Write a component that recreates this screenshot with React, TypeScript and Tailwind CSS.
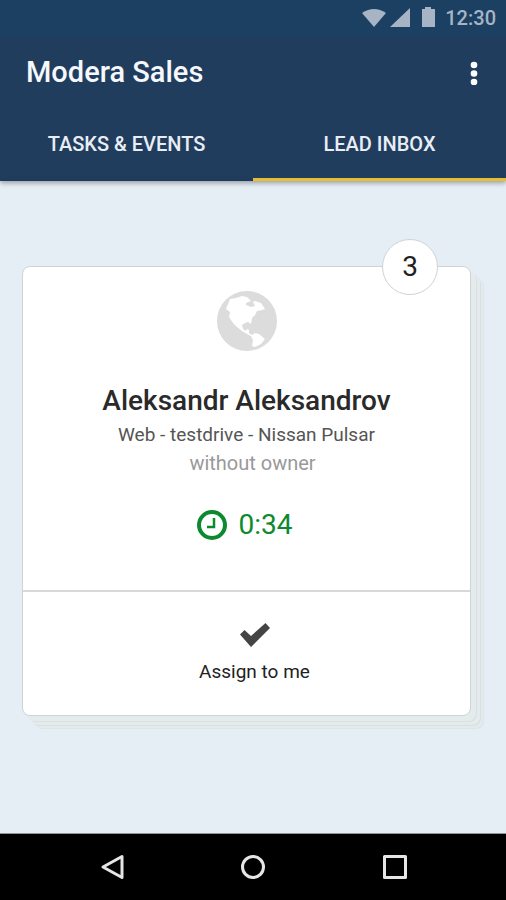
import type { ReactNode } from "react";

function StatusBar() {
  return (
    <div className="flex h-9 items-center justify-end bg-[#1c4062] pr-[10px] text-[#a6b4c5]">
      <svg width="84" height="24" viewBox="0 0 84 24" fill="currentColor" aria-hidden="true">
        <path d="M1 7Q13-1 25 7L13 21Z" />
        <path d="M49 2V21H29Z" />
        <path d="M64 1h6v2h4v18H61V3h3z" />
      </svg>
      <span className="text-xl font-medium">12:30</span>
    </div>
  );
}

function Tab({ active, children }: { active?: boolean; children: ReactNode }) {
  return (
    <button
      type="button"
      role="tab"
      aria-selected={!!active}
      className={
        "flex-1 border-b-[3px] text-xl font-medium text-[#e9eef6] " +
        (active ? "border-[#e9bd32]" : "border-[#1f3b5b]")
      }
    >
      {children}
    </button>
  );
}

function Globe() {
  return (
    <svg width="60" height="60" viewBox="0 0 60 60" aria-hidden="true">
      <circle cx="30" cy="30" r="30" fill="#dcdcdc" />
      <path
        fill="#fff"
        d="M13 8L19 7L25 5L30 6L34 10L29 12L29 14L34 16L38 15L36 11L38 10L44 12L48 18L45 19L40 20L38 24L35 27L34 33L31 31L28 32L25 34L26 38L29 40L30 38L32 39L32 42L35 44L38 42L42 43L48 48L44 53L38 56L35 55L36 49L34 45L30 43L25 40L20 36L16 32L12 26L13 21L9 18Z"
      />
    </svg>
  );
}

function LeadCard() {
  return (
    <article className="relative rounded-lg border border-[#d0d3d3] bg-white text-center shadow-[5px_5px_0_0_#e4ebed,6px_6px_0_0_#d9e0e1,9px_9px_0_0_#e4ebed,10px_10px_0_0_#d9e0e1,12px_12px_0_0_#e4ebed,13px_13px_0_0_#dce4e6]">
      <span className="absolute -top-7 right-8 flex size-14 items-center justify-center rounded-full border border-[#d0d3d3] bg-white text-[28px] text-[#222]">
        3
      </span>
      <div className="flex h-[323px] flex-col items-center pt-6">
        <Globe />
        <h2 className="mt-8 text-[28px] leading-9 font-medium text-[#2a2a2a]">Aleksandr Aleksandrov</h2>
        <p className="text-[19px] leading-8 text-[#555]">Web - testdrive - Nissan Pulsar</p>
        <p className="pl-3 text-xl leading-6 text-[#999]">without owner</p>
        <p className="mt-8 flex items-center gap-3 pr-1 text-[28px] leading-9 text-[#0c8a30]">
          <svg width="30" height="30" viewBox="0 0 30 30" fill="none" stroke="currentColor" aria-hidden="true">
            <circle cx="15" cy="15" r="13" strokeWidth="4" />
            <path d="M17 8v9h-7" strokeWidth="2.5" />
          </svg>
          0:34
        </p>
      </div>
      <button
        type="button"
        className="flex h-[125px] w-full flex-col items-center gap-2 border-t-2 border-[#d8d8d8] pt-[30px] pl-4 text-[19px] text-[#222]"
      >
        <svg width="32" height="26" viewBox="0 0 32 26" fill="#444" aria-hidden="true">
          <path d="M1 12.5L5.500 8L12 14L26.500 1L31 6L12 25z" />
        </svg>
        <span className="leading-8">Assign to me</span>
      </button>
    </article>
  );
}

function NavBar() {
  return (
    <nav className="flex h-[67px] items-center justify-between border-t border-[#8e9499] bg-black px-[98px]">
      <button type="button" aria-label="Back">
        <svg width="28" height="28" viewBox="0 0 28 28" fill="none" stroke="#e6e6e6" strokeWidth="3" strokeLinejoin="round">
          <path d="M24 3.500v21L5 14z" />
        </svg>
      </button>
      <button type="button" aria-label="Home">
        <svg width="28" height="28" viewBox="0 0 28 28" fill="none" stroke="#e6e6e6" strokeWidth="3">
          <circle cx="14" cy="14" r="10.5" />
        </svg>
      </button>
      <button type="button" aria-label="Recent apps">
        <svg width="28" height="28" viewBox="0 0 28 28" fill="none" stroke="#e6e6e6" strokeWidth="3" strokeLinejoin="round">
          <path d="M4.500 3.500h21v21h-21z" />
        </svg>
      </button>
    </nav>
  );
}

export default function App() {
  return (
    <div className="flex min-h-screen flex-col bg-[#e5eef5] font-[Roboto,sans-serif]">
      <header className="bg-[#213d5d] shadow-[0_2px_5px_rgba(0,0,0,0.35)]">
        <StatusBar />
        <div className="flex h-[74px] items-center justify-between pr-5 pl-[26px]">
          <h1 className="text-[29px] font-medium text-[#f5f8fc]">Modera Sales</h1>
          <button type="button" aria-label="More options">
            <svg width="24" height="24" viewBox="0 0 24 24" fill="#fff">
              <circle cx="12" cy="4" r="3.3" />
              <circle cx="12" cy="12.5" r="3.3" />
              <circle cx="12" cy="21" r="3.3" />
            </svg>
          </button>
        </div>
        <div role="tablist" className="flex h-[71px]">
          <Tab>TASKS &amp; EVENTS</Tab>
          <Tab active>LEAD INBOX</Tab>
        </div>
      </header>
      <main className="flex-1 pt-[85px] pr-[35px] pb-[117px] pl-[22px]">
        <LeadCard />
      </main>
      <NavBar />
    </div>
  );
}
